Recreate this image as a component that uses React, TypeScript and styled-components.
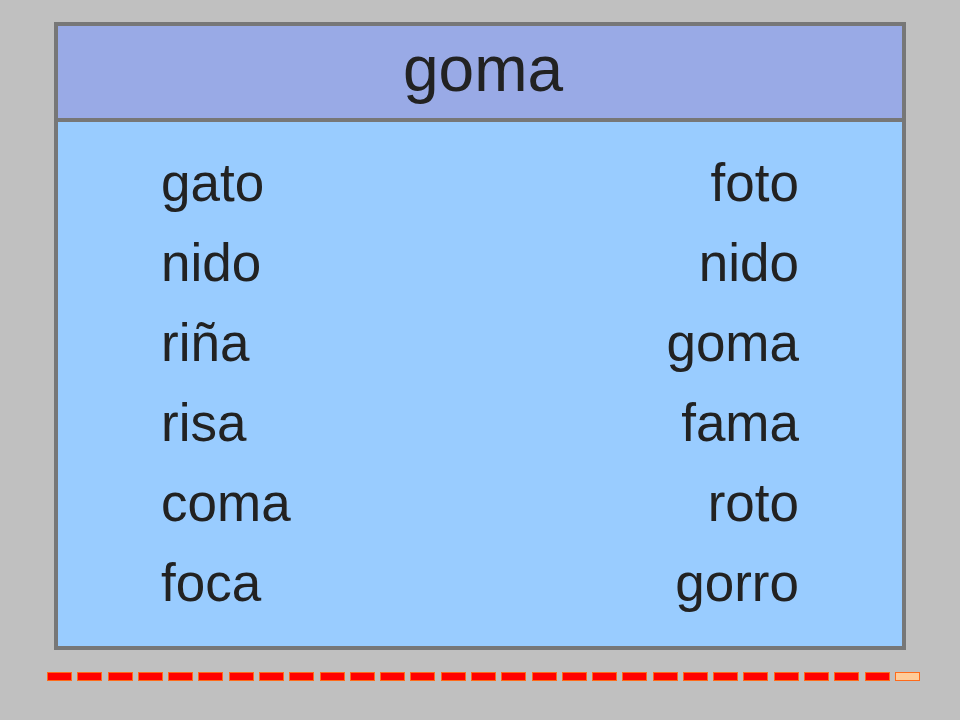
import React from "react";
import styled, { createGlobalStyle } from "styled-components";

const Global = createGlobalStyle`
  html, body { margin: 0; padding: 0; background: #c0c0c0; }
  body { width: 960px; height: 720px; overflow: hidden; font-family: "Liberation Sans", Arial, sans-serif; }
`;

const Page = styled.div`
  width: 960px;
  height: 720px;
  padding: 22px 0 0 54px;
  box-sizing: border-box;
  display: flex;
  flex-direction: column;
`;

const Panel = styled.div`
  width: 852px;
  height: 628px;
  box-sizing: border-box;
  border: 4px solid #777777;
  display: flex;
  flex-direction: column;
  background: #99ccff;
`;

const Header = styled.div`
  height: 92px;
  background: #99aae6;
  border-bottom: 4px solid #777777;
  color: #222222;
  font-size: 64px;
  line-height: 86px;
  text-align: center;
  padding-left: 6px;
`;

const Body = styled.div`
  flex: 1;
  display: grid;
  grid-template-columns: 1fr 1fr;
  grid-auto-rows: 80px;
  padding: 21px 103px 0 103px;
  color: #222222;
  font-size: 53px;
  line-height: 80px;
`;

const Word = styled.div<{ $right?: boolean }>`
  text-align: ${(p) => (p.$right ? "right" : "left")};
  white-space: nowrap;
`;

const DashRow = styled.div`
  margin: 22px 0 0 -7px;
  width: 873px;
  height: 9px;
  display: flex;
  justify-content: space-between;
`;

const Dash = styled.div<{ $light?: boolean }>`
  width: 25px;
  height: 9px;
  box-sizing: border-box;
  background: ${(p) => (p.$light ? "#ffcc99" : "#ff0000")};
  border: 1px solid #ff6a1a;
`;

const left = ["gato", "nido", "riña", "risa", "coma", "foca"];
const right = ["foto", "nido", "goma", "fama", "roto", "gorro"];

export default function App() {
  return (
    <Page>
      <Global />
      <Panel>
        <Header>goma</Header>
        <Body>
          {left.map((w, i) => (
            <React.Fragment key={i}>
              <Word>{w}</Word>
              <Word $right>{right[i]}</Word>
            </React.Fragment>
          ))}
        </Body>
      </Panel>
      <DashRow>
        {Array.from({ length: 29 }).map((_, i) => (
          <Dash key={i} $light={i === 28} />
        ))}
      </DashRow>
    </Page>
  );
}
